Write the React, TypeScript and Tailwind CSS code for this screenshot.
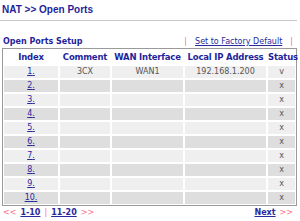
import React from "react";

const rows = [1, 2, 3, 4, 5, 6, 7, 8, 9, 10];

export default function App() {
  const v = "font-['DejaVu_Sans',Verdana,sans-serif]";
  return (
    <div className={`w-[300px] h-[221px] bg-white overflow-hidden ${v}`}>
      <div className="pl-[2px] pt-[3px] h-[20px] text-[10px] leading-[13px] text-[#1f1f9c] font-['Liberation_Sans',Arial,sans-serif] font-bold">
        NAT &gt;&gt; Open Ports
      </div>
      <div className="h-px bg-[#c8c8c8] w-[297px]" />
      <div className="h-[15px]" />
      <div className="flex items-end justify-between w-[297px] pl-[3px] pr-[4px] h-[11px] text-[8px] leading-[10px]">
        <span className="font-bold text-[#1f1f9c]">Open Ports Setup</span>
        <span className="flex gap-[8px]">
          <span className="text-[#ff6a8a]">|</span>
          <a className="text-[#2a2a9c] underline">Set to Factory Default</a>
          <span className="text-[#ff6a8a]">|</span>
        </span>
      </div>
      <div className="ml-[2px] mt-[1px] w-[295px] border border-[#9a9a9a] p-[1px] bg-white">
        <div className="grid grid-cols-[54px_50px_71px_81px_27px] gap-x-[2px] gap-y-[2px] text-[8px]">
          {["Index", "Comment", "WAN Interface", "Local IP Address", "Status"].map((h) => (
            <div key={h} className="h-[14px] leading-[14px] text-center font-bold text-[8.5px] text-[#1f1f9c] whitespace-nowrap tracking-[-0.2px]">
              {h}
            </div>
          ))}
          {rows.map((n) => {
            const bg = n % 2 === 1 ? "bg-[#efefef]" : "bg-[#dedede]";
            const cell = `h-[12px] leading-[12px] text-center ${bg} text-[#555]`;
            return (
              <React.Fragment key={n}>
                <div className={cell}>
                  <a className="text-[#2a2a9c] underline">{n}.</a>
                </div>
                <div className={cell}>{n === 1 ? "3CX" : ""}</div>
                <div className={cell}>{n === 1 ? "WAN1" : ""}</div>
                <div className={cell}>{n === 1 ? "192.168.1.200" : ""}</div>
                <div className={cell}>{n === 1 ? "v" : "x"}</div>
              </React.Fragment>
            );
          })}
        </div>
      </div>
      <div className="flex justify-between w-[297px] pl-[3px] pr-[4px] mt-[1px] text-[8px] leading-[11px]">
        <span className="flex gap-[4px]">
          <span className="text-[#ff6a8a]">&lt;&lt;</span>
          <a className="text-[#2a2a9c] underline font-bold">1-10</a>
          <span className="text-[#ff6a8a]">|</span>
          <a className="text-[#2a2a9c] underline font-bold">11-20</a>
          <span className="text-[#ff6a8a]">&gt;&gt;</span>
        </span>
        <span className="flex gap-[4px]">
          <a className="text-[#2a2a9c] underline font-bold">Next</a>
          <span className="text-[#ff6a8a]">&gt;&gt;</span>
        </span>
      </div>
    </div>
  );
}
